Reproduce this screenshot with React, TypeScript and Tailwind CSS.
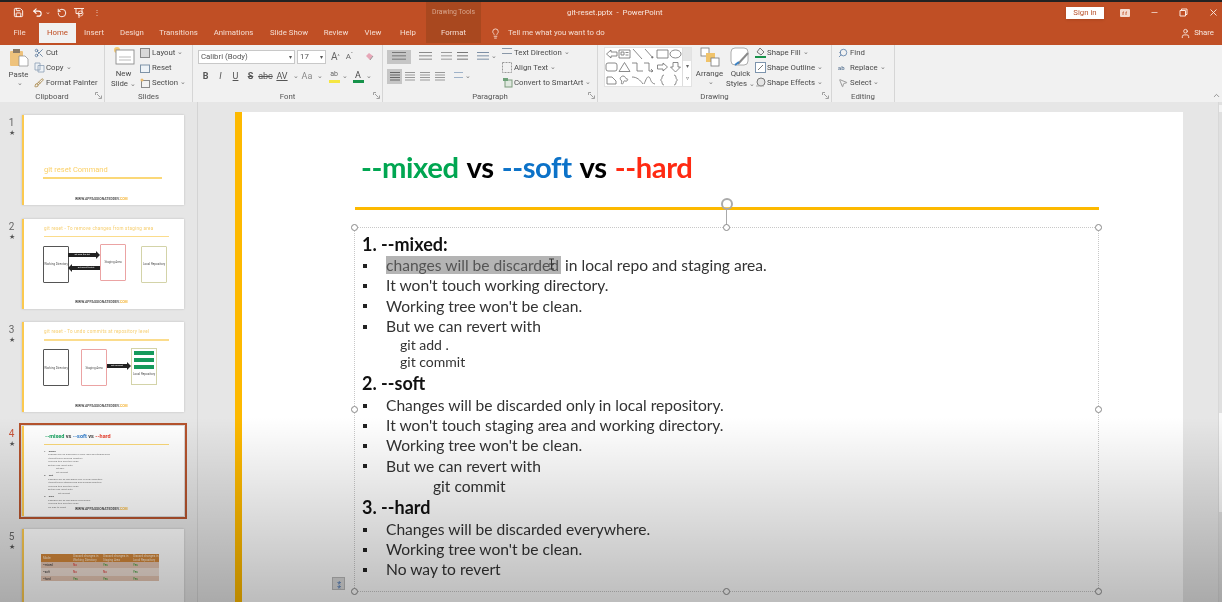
import type { ReactNode } from "react";
import {
  Brush,
  ChevronUp,
  Lightbulb,
  Minus,
  MousePointer2,
  RotateCcw,
  Save,
  Scissors,
  Search,
  Undo2,
  User,
  X,
} from "lucide-react";

const UI = { fontFamily: 'Roboto, "Open Sans", sans-serif' };
const SLIDE = { fontFamily: 'Lato, "Open Sans", sans-serif' };

function Caret() {
  return <span className="ml-[2px] inline-block w-[6px] text-[7px] leading-none text-[#777]">⌄</span>;
}

function Launcher() {
  return (
    <svg width="7" height="7" viewBox="0 0 7 7" className="absolute bottom-[3px] right-[2px]">
      <path d="M.5 3V.5H3M6.5 3.500v3h-3M2 2l3.500 3.500" fill="none" stroke="#8a8a8a" strokeWidth="0.8" />
    </svg>
  );
}

function Group({ label, width, launcher, children }: { label: string; width: string; launcher?: boolean; children: ReactNode }) {
  return (
    <div className={`relative flex h-full flex-col border-r border-[#d6d6d6] ${width}`}>
      <div className="flex h-[46px] min-h-0">{children}</div>
      <div className="flex h-[11px] items-center justify-center text-[7.800px] leading-none text-[#555]">{label}</div>
      {launcher && <Launcher />}
    </div>
  );
}

function SmallItem({ icon, text, caret }: { icon: ReactNode; text: string; caret?: boolean }) {
  return (
    <div className="flex h-[15px] items-center whitespace-nowrap text-[7.800px] text-[#4a4a4a]">
      <span className="flex w-[12px] shrink-0 justify-start">{icon}</span>
      {text}
      {caret && <Caret />}
    </div>
  );
}

function FontBtn({ className, children, w = "w-[15px]" }: { className?: string; children: ReactNode; w?: string }) {
  return <span className={`flex h-[15px] items-center justify-center text-[9px] text-[#555] ${w} ${className ?? ""}`}>{children}</span>;
}

function Lines({ w = 12, n = 3, c = "#777" }: { w?: number; n?: number; c?: string }) {
  const gap = 10 / n;
  return (
    <svg width={w} height="11" viewBox={`0 0 ${w} 11`} className="block">
      {Array.from({ length: n }, (_, i) => (
        <rect key={i} x="0" y={1 + i * gap} width={w} height="1" fill={c} />
      ))}
    </svg>
  );
}

function ShapeIcon({ d }: { d: string }) {
  return (
    <svg width="13" height="12" viewBox="0 0 13 12" className="shrink-0">
      <path d={d} fill="none" stroke="#6d6d6d" strokeWidth="0.8" />
    </svg>
  );
}

const shapes = [
  "M6 2 1.500 6 6 10V8h6V4H6z",
  "M1 2h11v8H1zM3 4h3v3H3zM7.500 4.500h3M7.500 7h3",
  "M2 1l9 10",
  "M2 1l8 9M10 10l-2-.5M10 10l-.5-2",
  "M1 2h11v8H1z",
  "M6.500 2a5.500 4 0 1 0 .01 0z",
  "M3 2h7a2 2 0 0 1 2 2v4a2 2 0 0 1-2 2H3a2 2 0 0 1-2-2V4a2 2 0 0 1 2-2z",
  "M6.500 1.500 12 10.500H1z",
  "M1 2h5v8h6",
  "M1 2h5v8h4M10 10l-2-2M10 10l-2 1",
  "M7 2l4.500 4L7 10V8H1.500V4H7z",
  "M4 1.500h5V6h2.500L6.500 11 1.500 6H4z",
  "M2 3h5l4 4v3H2z",
  "M5 2c3 0 2 3 4 3s0 3-2 2-1 3-3 3 1-3-1-4 0-4 2-4z",
  "M1 3c5 0 8 3 11 7",
  "M1 10C3 6 4 2 6 3s1 6 6 7",
  "M8 1C5 1 7 5 4.500 6 7 7 5 11 8 11",
  "M5 1c3 0 1 4 3.500 5C6 7 8 11 5 11",
];

function Tab({ w, children, active }: { w: string; children: ReactNode; active?: boolean }) {
  return (
    <div className={`flex h-full items-center justify-center text-[7.800px] ${w} ${active ? "bg-[#f1f1f1] text-[#c14f24]" : "text-[#f4dcd1]"}`}>
      {children}
    </div>
  );
}

function TitleBar() {
  return (
    <header className="relative h-[41px] bg-[#c04f25] text-[#f7e6de]" style={UI}>
      {/* window row */}
      <div className="flex h-[21px] items-center">
        <div className="flex w-[426px] items-center pl-[13px]">
          <Save size={11} strokeWidth={2} className="text-white" />
          <Undo2 size={11} strokeWidth={2.4} className="ml-[8px] text-white" />
          <span className="ml-[2px] text-[7px] leading-none text-[#eccabb]">⌄</span>
          <RotateCcw size={10} strokeWidth={2.2} className="ml-[6px] text-white" />
          <svg width="12" height="12" viewBox="0 0 12 12" className="ml-[6px]">
            <path d="M1 1.500h10M3 1.500v5h6v-5M6 7v4" fill="none" stroke="#fbe8df" strokeWidth="1" />
            <circle cx="7.500" cy="6.500" r="2.500" fill="none" stroke="#fbe8df" strokeWidth="0.8" />
          </svg>
          <span className="ml-[8px] text-[8px] leading-none text-[#eccabb]">⋮</span>
        </div>
        <div className="flex h-full w-[55px] items-center justify-center bg-[#a9481f] text-[6.800px] text-[#d9a78f]">Drawing Tools</div>
        <div className="ml-[86px] whitespace-nowrap text-[7.800px]">git-reset.pptx&nbsp; -&nbsp; PowerPoint</div>
        <div className="ml-auto flex items-center">
          <div className="flex h-[12px] w-[38px] items-center justify-center bg-white text-[7.800px] text-[#b8512a] shadow-sm">Sign in</div>
          <svg width="10" height="8" viewBox="0 0 10 8" className="ml-[16px]">
            <rect width="10" height="8" rx="1" fill="#f4dcd1" />
            <path d="M3 6V3h1M6 6V3h1" stroke="#c04f25" strokeWidth="0.8" fill="none" />
          </svg>
          <Minus size={9} className="ml-[20px] text-[#f7e6de]" />
          <svg width="9" height="9" viewBox="0 0 9 9" className="ml-[20px]">
            <path d="M1 2.500h5.500V8H1zM2.500 2.500V1H8v5.500H6.500" fill="none" stroke="#fbe8df" strokeWidth="1" />
          </svg>
          <X size={11} className="ml-[20px] mr-[3px] text-[#fbe8df]" />
        </div>
      </div>
      {/* tabs row */}
      <div className="flex h-[20px] items-center">
        <Tab w="w-[39px]">File</Tab>
        <Tab w="w-[37px]" active>Home</Tab>
        <Tab w="w-[36px]">Insert</Tab>
        <Tab w="w-[40px]">Design</Tab>
        <Tab w="w-[53px]">Transitions</Tab>
        <Tab w="w-[57px]">Animations</Tab>
        <Tab w="w-[54px]">Slide Show</Tab>
        <Tab w="w-[40px]">Review</Tab>
        <Tab w="w-[34px]">View</Tab>
        <Tab w="w-[36px]">Help</Tab>
        <div className="flex h-full w-[55px] items-center justify-center bg-[#a9481f] text-[7.800px] text-[#f4dcd1]">Format</div>
        <Lightbulb size={11} className="ml-[9px] text-[#f4dcd1]" />
        <span className="ml-[7px] whitespace-nowrap text-[7.800px] text-[#f4dcd1]">Tell me what you want to do</span>
        <div className="ml-auto mr-[8px] flex items-center text-[7.800px] text-[#f7e6de]">
          <User size={11} className="mr-[3px]" />
          Share
        </div>
      </div>
    </header>
  );
}

function Ribbon() {
  return (
    <div className="flex h-[59px] border-t-[2px] border-[#c04f25] bg-[#f1f1f1]" style={UI}>
      <Group label="Clipboard" width="w-[105px]" launcher>
        <div className="flex w-[34px] flex-col items-center pl-[3px] pt-[3px] text-[7.800px] leading-[11px] text-[#4a4a4a]">
          <svg width="20" height="19" viewBox="0 0 20 19">
            <rect x="1" y="3" width="13" height="15" rx="1" fill="#eec27c" />
            <rect x="4" y="1" width="7" height="4" fill="#8a7a66" />
            <path d="M10 8h6l3 3v7h-9z" fill="#fff" stroke="#888" strokeWidth="0.7" />
          </svg>
          <span className="mt-[2px]">Paste</span>
          <Caret />
        </div>
        <div className="flex flex-col">
          <SmallItem icon={<Scissors size={10} className="text-[#5b7b9c]" />} text="Cut" />
          <SmallItem
            icon={
              <svg width="11" height="11" viewBox="0 0 11 11">
                <path d="M1 1h5v7H1zM4 3.500h6V10H4z" fill="#eef2f6" stroke="#8ba0b5" strokeWidth="0.8" />
              </svg>
            }
            text="Copy"
            caret
          />
          <SmallItem icon={<Brush size={10} className="text-[#a5813f]" />} text="Format Painter" />
        </div>
      </Group>

      <Group label="Slides" width="w-[88px]">
        <div className="flex w-[35px] flex-col items-center pl-[2px] pt-[1px] text-center text-[7.800px] leading-[10px] text-[#4a4a4a]">
          <svg width="22" height="20" viewBox="0 0 22 20">
            <circle cx="4" cy="4" r="3" fill="#f3c873" />
            <rect x="3" y="4" width="18" height="14" fill="#fff" stroke="#8d8d8d" strokeWidth="0.9" />
            <path d="M6 11h12M6 14h12" stroke="#bbb" />
          </svg>
          <span className="mt-[3px]">New</span>
          <span>Slide<Caret /></span>
        </div>
        <div className="flex flex-col">
          <SmallItem icon={<svg width="10" height="10"><rect x=".5" y=".5" width="9" height="9" fill="#d8d8d8" stroke="#888" /></svg>} text="Layout" caret />
          <SmallItem icon={<svg width="10" height="10"><rect x=".5" y="2" width="9" height="7.500" fill="#eef3f7" stroke="#7e93a7" /></svg>} text="Reset" />
          <SmallItem icon={<svg width="10" height="10"><rect x="1.500" y="2.500" width="8" height="7" fill="#f2f2f2" stroke="#8a8a8a" /><circle cx="2" cy="2" r="1.500" fill="#e9b96a" /></svg>} text="Section" caret />
        </div>
      </Group>

      <Group label="Font" width="w-[190px]" launcher>
        <div className="flex flex-col pl-[5px] pt-[4px]">
          <div className="flex h-[15px] items-center">
            <div className="flex h-[14px] w-[97px] items-center justify-between border border-[#c8c8c8] bg-white px-[2px] text-[7.800px] text-[#555]">
              Calibri (Body)<span className="text-[6px] text-[#555]">▾</span>
            </div>
            <div className="ml-[2px] flex h-[14px] w-[29px] items-center justify-between border border-[#c8c8c8] bg-white px-[2px] text-[7.800px] text-[#555]">
              17<span className="text-[6px] text-[#555]">▾</span>
            </div>
            <span className="ml-[5px] text-[10px] text-[#666]">A<sup className="text-[5px]">^</sup></span>
            <span className="ml-[6px] text-[8px] text-[#666]">A<sup className="text-[5px]">ˇ</sup></span>
            <svg width="11" height="11" viewBox="0 0 11 11" className="ml-[11px]">
              <path d="M2 5l3-3 4 3-3 4z" fill="#e7a7b8" />
              <path d="M6 9 9 5" stroke="#999" />
            </svg>
          </div>
          <div className="mt-[5px] flex h-[15px] items-center">
            <FontBtn className="font-bold">B</FontBtn>
            <FontBtn className="italic">I</FontBtn>
            <FontBtn className="underline">U</FontBtn>
            <FontBtn className="font-bold line-through">S</FontBtn>
            <FontBtn className="text-[7.500px] line-through">abc</FontBtn>
            <FontBtn className="text-[7.500px] underline" w="w-[18px]">AV</FontBtn>
            <Caret />
            <FontBtn className="text-[#888]" w="w-[16px]">Aa</FontBtn>
            <Caret />
            <span className="ml-[5px] flex w-[12px] flex-col items-center text-[7px] leading-[7px] text-[#666]">
              ab
              <span className="mt-[2px] h-[3px] w-[11px] bg-[#f5e642]" />
            </span>
            <Caret />
            <span className="ml-[4px] flex w-[12px] flex-col items-center text-[9px] leading-[8px] text-[#444]">
              A
              <span className="mt-[1px] h-[3px] w-[11px] bg-[#16924a]" />
            </span>
            <Caret />
          </div>
        </div>
      </Group>

      <Group label="Paragraph" width="w-[215px]" launcher>
        <div className="flex w-[115px] flex-col pl-[4px] pt-[4px]">
          <div className="flex h-[15px] items-center">
            <span className="flex h-[14px] w-[24px] items-center justify-center bg-[#c6c6c6]"><Lines w={14} /></span>
            <span className="ml-[8px]"><Lines w={13} c="#8a8a8a" /></span>
            <span className="ml-[9px]"><Lines w={11} c="#999" /></span>
            <span className="ml-[5px]"><Lines w={11} c="#777" /></span>
            <span className="ml-[9px]"><Lines w={12} c="#7d8fa5" /></span>
            <Caret />
          </div>
          <div className="mt-[5px] flex h-[15px] items-center">
            <span className="flex h-[15px] w-[15px] items-center justify-center bg-[#c6c6c6]"><Lines w={10} n={4} c="#666" /></span>
            <span className="ml-[3px]"><Lines w={10} n={4} c="#999" /></span>
            <span className="ml-[5px]"><Lines w={10} n={4} c="#999" /></span>
            <span className="ml-[5px]"><Lines w={10} n={4} c="#999" /></span>
            <span className="ml-[9px]"><Lines w={9} n={2} c="#9fb2c8" /></span>
            <Caret />
          </div>
        </div>
        <div className="ml-[4px] flex flex-col">
          <SmallItem icon={<Lines w={10} n={2} c="#8a98a8" />} text="Text Direction" caret />
          <SmallItem icon={<svg width="10" height="11"><rect x=".5" y=".5" width="9" height="10" fill="none" stroke="#999" strokeDasharray="2 1" /></svg>} text="Align Text" caret />
          <SmallItem icon={<svg width="11" height="11"><rect x="3" y="3" width="7" height="7" fill="#dfe8df" stroke="#7c9b7c" /><rect x="1" y="1" width="5" height="3" fill="#6fa27a" /></svg>} text="Convert to SmartArt" caret />
        </div>
      </Group>

      <Group label="Drawing" width="w-[234px]" launcher>
        <div className="ml-[6px] mt-[2px] flex h-[40px] w-[88px] border border-[#e2e2e2] bg-white">
          <div className="grid w-[78px] grid-cols-6 place-items-center">
            {shapes.map((d) => (
              <ShapeIcon key={d} d={d} />
            ))}
          </div>
          <div className="flex w-[9px] flex-col border-l border-[#ddd] text-center text-[6px] text-[#666]">
            <span className="flex-1 bg-[#e5e5e5]" />
            <span className="flex-1">▾</span>
            <span className="flex-1">▿</span>
          </div>
        </div>
        <div className="ml-[3px] flex w-[29px] flex-col items-center pt-[2px] text-[7.800px] leading-[10px] text-[#4a4a4a]">
          <svg width="20" height="20" viewBox="0 0 20 20">
            <rect x="1" y="1" width="8" height="8" fill="#fff" stroke="#777" strokeWidth="0.8" />
            <rect x="6" y="6" width="9" height="9" fill="#f0c36a" />
            <rect x="11" y="11" width="8" height="8" fill="#fff" stroke="#777" strokeWidth="0.8" />
          </svg>
          <span className="mt-[2px]">Arrange</span>
          <Caret />
        </div>
        <div className="ml-[3px] flex w-[27px] flex-col items-center pt-[2px] text-[7.800px] leading-[10px] text-[#4a4a4a]">
          <svg width="21" height="20" viewBox="0 0 21 20">
            <rect x="1" y="1" width="17" height="17" rx="4" fill="#fff" stroke="#999" strokeWidth="0.8" />
            <path d="M8 17 18 6" stroke="#8a8a8a" strokeWidth="2" />
            <path d="M5 18l4-3" stroke="#3b82c4" strokeWidth="2" />
          </svg>
          <span className="mt-[2px]">Quick</span>
          <span className="whitespace-nowrap">Styles<Caret /></span>
        </div>
        <div className="ml-[1px] flex flex-col">
          <SmallItem icon={<svg width="11" height="11"><path d="M5 1l4 4-3 3-4-3z" fill="#eee" stroke="#777" /><rect y="9" width="11" height="2" fill="#17914a" /></svg>} text="Shape Fill" caret />
          <SmallItem icon={<svg width="11" height="11"><rect x=".5" y=".5" width="10" height="10" fill="#fff" stroke="#7d94ad" /><path d="M3 8l5-5" stroke="#777" /></svg>} text="Shape Outline" caret />
          <SmallItem icon={<svg width="11" height="11"><circle cx="6" cy="5" r="4" fill="#e4e4e4" stroke="#777" /><path d="M1 9h8" stroke="#aaa" /></svg>} text="Shape Effects" caret />
        </div>
      </Group>

      <Group label="Editing" width="w-[63px]">
        <div className="flex flex-col pl-[6px]">
          <SmallItem icon={<Search size={10} className="-scale-x-100 text-[#5d7fa8]" />} text="Find" />
          <SmallItem icon={<span className="text-[6px] font-bold leading-none text-[#6f86a0]">ab</span>} text="Replace" caret />
          <SmallItem icon={<MousePointer2 size={10} className="text-[#8a8a8a]" />} text="Select" caret />
        </div>
      </Group>
      <div className="relative flex-1">
        <ChevronUp size={9} className="absolute bottom-[2px] right-[1px] text-[#777]" />
      </div>
    </div>
  );
}

function Thumb({ n, active, children }: { n: number; active?: boolean; children: ReactNode }) {
  return (
    <div className="flex">
      <div className={`flex w-[22px] shrink-0 flex-col items-center pl-[1px] pt-[1px] text-[10px] leading-[13px] ${active ? "text-[#c8553a]" : "text-[#666]"}`}>
        {n}
        <span className="text-[7px] leading-[9px] text-[#555]">★</span>
      </div>
      <div className={`relative h-[90px] w-[162px] shrink-0 overflow-hidden bg-white shadow-[0_0_2px_#bbb] ${active ? "outline-[2px] outline-offset-[1px] outline-[#b5532d]" : ""}`}>
        <div className="absolute bottom-0 left-0 top-0 w-[2px] bg-[#fbc94f]" />
        {children}
      </div>
    </div>
  );
}

function Footer() {
  return (
    <div className="absolute bottom-[3px] left-[53px] whitespace-nowrap text-[3.500px] font-bold text-[#555]">
      WWW.APPASSIONATEDDEV.<span className="text-[#f4b73f]">COM</span>
    </div>
  );
}

function ThumbTitle({ text }: { text: string }) {
  return (
    <>
      <div className="absolute left-[22px] top-[7px] whitespace-nowrap text-[4.500px] tracking-[0.3px] text-[#f6cd6c]">{text}</div>
      <div className="absolute left-[22px] top-[17px] h-[1.500px] w-[125px] bg-[#fbdc8c]" />
    </>
  );
}

function MiniBox({ x, y, color, text }: { x: number; y: number; color: string; text: string }) {
  return (
    <div
      className="absolute flex h-[37px] w-[26px] items-center justify-center rounded-[1px] border bg-white text-center text-[3px] leading-[4px] text-[#555]"
      style={{ left: x, top: y, borderColor: color }}
    >
      {text}
    </div>
  );
}

function MiniArrow({ x, y, w, left, text }: { x: number; y: number; w: number; left?: boolean; text: string }) {
  return (
    <div className={`absolute flex items-center ${left ? "flex-row-reverse" : ""}`} style={{ left: x, top: y, width: w }}>
      <div className="flex h-[4px] flex-1 items-center justify-center whitespace-nowrap bg-[#222] text-[2.500px] text-white">{text}</div>
      <div className={`h-0 w-0 border-y-[4px] border-y-transparent ${left ? "border-r-[4px] border-r-[#222]" : "border-l-[4px] border-l-[#222]"}`} />
    </div>
  );
}

function SlidePane() {
  const mini = [
    ["1. --mixed", true, 0],
    ["changes will be discarded in local repo and staging area", false, 4],
    ["It won't touch working directory", false, 4],
    ["Working tree won't be clean", false, 4],
    ["But we can revert with", false, 4],
    ["git add .", false, 12],
    ["git commit", false, 12],
    ["2. --soft", true, 0],
    ["Changes will be discarded only in local repository", false, 4],
    ["It won't touch staging area and working directory", false, 4],
    ["Working tree won't be clean", false, 4],
    ["But we can revert with", false, 4],
    ["git commit", false, 14],
    ["3. --hard", true, 0],
    ["Changes will be discarded everywhere", false, 4],
    ["Working tree won't be clean", false, 4],
    ["No way to revert", false, 4],
  ] as const;
  return (
    <aside className="flex w-[198px] shrink-0 flex-col border-r border-[#d4d4d4] bg-[#e6e6e6] pt-[13px]" style={UI}>
      <div className="flex flex-col gap-[13.500px]">
        <Thumb n={1}>
          <div className="absolute left-[22px] top-[49px] text-[7.500px] text-[#fbd067]">git reset Command</div>
          <div className="absolute left-[21px] top-[62px] h-[1.500px] w-[119px] bg-[#fbd878]" />
          <Footer />
        </Thumb>
        <Thumb n={2}>
          <ThumbTitle text="git reset - To remove changes from staging area" />
          <MiniBox x={21} y={27} color="#555" text="Working Directory" />
          <MiniBox x={78} y={25} color="#eba3a3" text="Staging Area" />
          <MiniBox x={119} y={27} color="#d3d3a8" text="Local Repository" />
          <MiniArrow x={46} y={32} w={32} text="git add file.txt" />
          <MiniArrow x={46} y={45} w={32} left text="git reset file.txt" />
          <Footer />
        </Thumb>
        <Thumb n={3}>
          <ThumbTitle text="git reset - To undo commits at repository level" />
          <MiniBox x={21} y={27} color="#555" text="Working Directory" />
          <MiniBox x={59} y={27} color="#eba3a3" text="Staging Area" />
          <MiniArrow x={85} y={40} w={24} text="git commit" />
          <div className="absolute left-[109px] top-[26px] flex h-[37px] w-[26px] flex-col items-center gap-[3px] border border-[#d3d3a8] pt-[2px]">
            <span className="h-[4px] w-[20px] bg-[#159a5b]" />
            <span className="h-[4px] w-[20px] bg-[#159a5b]" />
            <span className="h-[4px] w-[20px] bg-[#159a5b]" />
            <span className="mt-[1px] text-[3px] leading-none text-[#555]">Local Repository</span>
          </div>
          <Footer />
        </Thumb>
        <Thumb n={4} active>
          <div className="absolute left-[23px] top-[6px] text-[5.500px] font-bold">
            <span className="text-[#13a05d]">--mixed</span> <span className="text-[#444]">vs</span> <span className="text-[#2a78c8]">--soft</span> <span className="text-[#444]">vs</span> <span className="text-[#e8402f]">--hard</span>
          </div>
          <div className="absolute left-[22px] top-[18px] h-[1.500px] w-[125px] bg-[#fbd878]" />
          <div className="absolute left-[22px] top-[24px] flex flex-col">
            {mini.map(([t, bold, pad], i) => (
              <div
                key={i}
                className={`h-[3.500px] whitespace-nowrap text-[2.500px] leading-[3.500px] ${bold ? "font-bold text-[#444]" : "text-[#777]"}`}
                style={{ paddingLeft: pad }}
              >
                {t}
              </div>
            ))}
          </div>
          <Footer />
        </Thumb>
        <Thumb n={5}>
          <div className="absolute left-[19px] top-[25px] w-[118px] text-[3px] leading-[4px]">
            <div className="grid h-[8px] grid-cols-[30px_30px_30px_28px] items-center bg-[#d2873a] pl-[2px] text-[#f9e7cf]">
              <span>Mode</span>
              <span>Discard changes in Working Directory</span>
              <span>Discard changes in Staging Area</span>
              <span>Discard changes in Local Repository</span>
            </div>
            <div className="grid h-[6px] grid-cols-[30px_30px_30px_28px] items-center bg-[#e4c5b2] pl-[2px]">
              <span className="text-[#333]">--mixed</span><span className="text-[#d33]">No</span><span className="text-[#393]">Yes</span><span className="text-[#393]">Yes</span>
            </div>
            <div className="grid h-[8px] grid-cols-[30px_30px_30px_28px] items-center bg-[#efdfd5] pl-[2px]">
              <span className="text-[#333]">--soft</span><span className="text-[#d33]">No</span><span className="text-[#d33]">No</span><span className="text-[#393]">Yes</span>
            </div>
            <div className="grid h-[5px] grid-cols-[30px_30px_30px_28px] items-center bg-[#e4c5b2] pl-[2px]">
              <span className="text-[#333]">--hard</span><span className="text-[#393]">Yes</span><span className="text-[#393]">Yes</span><span className="text-[#393]">Yes</span>
            </div>
          </div>
        </Thumb>
      </div>
    </aside>
  );
}

function Handle({ className }: { className: string }) {
  return <span className={`absolute h-[7px] w-[7px] rounded-full border border-[#888] bg-white ${className}`} />;
}

function Bullet({ children, first }: { children: ReactNode; first?: boolean }) {
  return (
    <div className={`flex h-[20.200px] items-center whitespace-nowrap text-[15.600px] leading-none text-[#333] ${first ? "mt-[2px]" : ""}`}>
      <span className="flex w-[24px] shrink-0 pl-[1px]">
        <span className="h-[4px] w-[4px] bg-[#222]" />
      </span>
      <span>{children}</span>
    </div>
  );
}

function Heading({ children, top }: { children: ReactNode; top?: boolean }) {
  return <div className={`flex h-[21px] items-center text-[18px] font-bold leading-none text-[#111] ${top ? "mt-[2px]" : ""}`}>{children}</div>;
}

function Indent({ pad, h, children }: { pad: string; h: string; children: ReactNode }) {
  return <div className={`flex items-center text-[14px] leading-none text-[#333] ${pad} ${h}`}>{children}</div>;
}

function Canvas() {
  return (
    <main className="flex-1 overflow-hidden bg-[#e6e6e6] pl-[37px] pt-[10px]" style={SLIDE}>
      <div className="relative h-[600px] w-[948px] border-l-[7px] border-[#fdb900] bg-white pl-[113px] pt-[37px]">
        <h1 className="flex h-[36px] items-center pl-[6px] text-[29.200px] font-bold leading-none tracking-[-0.4px] text-black">
          <span className="text-[#00a651]">--mixed</span>
          <span className="ml-[8px]">vs</span>
          <span className="ml-[8px] text-[#0c72c8]">--soft</span>
          <span className="ml-[8px]">vs</span>
          <span className="ml-[8px] text-[#ff2a12]">--hard</span>
        </h1>
        <div className="relative mt-[22px] h-[3px] w-[744px] bg-[#fdb900]">
          <span className="absolute -top-[9px] left-[366px] h-[12px] w-[12px] rounded-full border-2 border-[#aaa] bg-white/30" />
          <span className="absolute left-[371px] top-[3px] h-[16px] w-[1px] bg-[#aaa]" />
        </div>
        <div className="relative -ml-[1px] mt-[17px] h-[365px] w-[745px] border border-dotted border-[#c8c8c8] pl-[7px] pt-[5px]">
          <Handle className="-left-[4px] -top-[4px]" />
          <Handle className="left-[368px] -top-[4px]" />
          <Handle className="-right-[4px] -top-[4px]" />
          <Handle className="-left-[4px] top-[178px]" />
          <Handle className="-right-[4px] top-[178px]" />
          <Handle className="-bottom-[4px] -left-[4px]" />
          <Handle className="-bottom-[4px] left-[368px]" />
          <Handle className="-bottom-[4px] -right-[4px]" />
          <span className="absolute -left-[23px] bottom-[1px] flex h-[13px] w-[13px] items-center justify-center border border-[#bbb] bg-[#dcdcdc] text-[8px] leading-none text-[#4a78b8]">⁑</span>

          <Heading>1. --mixed:</Heading>
          <Bullet first>
            <span className="relative bg-[#b4b4b4] pr-[2px] text-[#555]">
              changes will be discarded
              <svg width="7" height="12" viewBox="0 0 7 12" className="absolute right-[6px] top-[2px]">
                <path d="M1 1h5M1 11h5M3.500 1v10M1 6h5" fill="none" stroke="#333" strokeWidth="1" />
              </svg>
            </span>{" "}
            in local repo and staging area.
          </Bullet>
          <Bullet>It won't touch working directory.</Bullet>
          <Bullet>Working tree won't be clean.</Bullet>
          <Bullet>But we can revert with</Bullet>
          <Indent pad="pl-[38px]" h="h-[17px]">git add .</Indent>
          <Indent pad="pl-[38px]" h="h-[17px]">git commit</Indent>
          <Heading top>2. --soft</Heading>
          <Bullet first>Changes will be discarded only in local repository.</Bullet>
          <Bullet>It won't touch staging area and working directory.</Bullet>
          <Bullet>Working tree won't be clean.</Bullet>
          <Bullet>But we can revert with</Bullet>
          <Indent pad="pl-[71px] text-[15.600px]" h="h-[20px]">git commit</Indent>
          <Heading>3. --hard</Heading>
          <Bullet first>Changes will be discarded everywhere.</Bullet>
          <Bullet>Working tree won't be clean.</Bullet>
          <Bullet>No way to revert</Bullet>
        </div>
      </div>
    </main>
  );
}

function Scrollbar() {
  return (
    <div className="flex w-[4px] shrink-0 flex-col border-l border-[#d8d8d8] bg-[#e0e0e0] pt-[3px]">
      <span className="h-[7px] bg-[#f4f4f4]" />
      <span className="mt-[301px] h-[99px] bg-[#f8f8f8]" />
    </div>
  );
}

export default function App() {
  return (
    <div className="relative flex h-[602px] w-[1222px] flex-col overflow-hidden bg-[#e6e6e6] blur-[0.45px]">
      <div className="h-[2px] bg-[#222]" />
      <TitleBar />
      <Ribbon />
      <div className="flex min-h-0 flex-1">
        <SlidePane />
        <Canvas />
        <Scrollbar />
      </div>
      {/* video player shadow that darkens the bottom of the frame */}
      <div className="pointer-events-none absolute inset-x-0 bottom-0 h-[185px] bg-gradient-to-b from-transparent to-black/[0.26]" />
    </div>
  );
}
